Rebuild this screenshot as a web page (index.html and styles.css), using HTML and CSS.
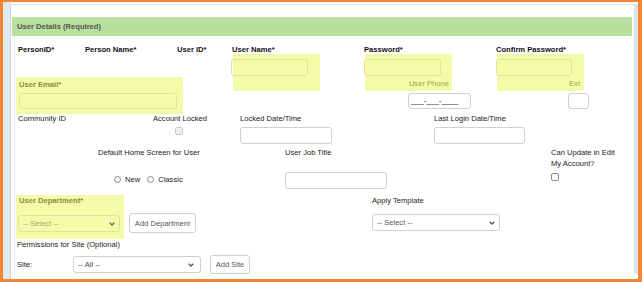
FILE: index.html
```html
<!DOCTYPE html>
<html lang="en">
<head>
    <meta charset="UTF-8">
    <title>User Details</title>
    <link rel="stylesheet" href="styles.css">
</head>
<body>
    <div class="frame">
        <div class="rail-left"></div>
        <div class="main">
            <div class="section-bar">User Details (Required)</div>
            <div class="form">
                <!-- account row -->
                <div class="row">
                    <div class="col-ids">
                        <div class="id-labels">
                            <span class="lbl req w-person-id">PersonID*</span>
                            <span class="lbl req w-person-name">Person Name*</span>
                            <span class="lbl req">User ID*</span>
                        </div>
                        <div class="hl hl-email">
                            <span class="lbl hl-lbl">User Email*</span>
                            <div class="field field-email"></div>
                        </div>
                    </div>
                    <div class="col-username">
                        <span class="lbl req pad-1">User Name*</span>
                        <div class="hl hl-cred shift-2">
                            <div class="field field-cred pull-2"></div>
                        </div>
                    </div>
                    <div class="col-password">
                        <span class="lbl req pad-1">Password*</span>
                        <div class="hl hl-cred shift-2">
                            <div class="field field-cred pull-1"></div>
                            <span class="lbl hl-note note-phone">User Phone</span>
                        </div>
                        <div class="field field-phone">___-___-____</div>
                    </div>
                    <div class="col-confirm">
                        <span class="lbl req">Confirm Password*</span>
                        <div class="hl hl-cred shift-1">
                            <div class="field field-cred field-confirm pull-1"></div>
                            <span class="lbl hl-note note-ext">Ext</span>
                        </div>
                        <div class="field field-ext"></div>
                    </div>
                </div>

                <!-- status row -->
                <div class="row">
                    <div class="col-community">
                        <span class="lbl">Community ID</span>
                    </div>
                    <div class="col-locked">
                        <span class="lbl">Account Locked</span>
                        <span class="checkbox is-disabled chk-locked"></span>
                    </div>
                    <div class="col-locked-date">
                        <span class="lbl">Locked Date/Time</span>
                        <div class="field field-date"></div>
                    </div>
                    <div class="col-last-login">
                        <span class="lbl">Last Login Date/Time</span>
                        <div class="field field-date field-login"></div>
                    </div>
                </div>

                <!-- home screen row -->
                <div class="row row-home">
                    <div class="col-home">
                        <span class="lbl">Default Home Screen for User</span>
                        <div class="radios">
                            <span class="radio"></span><span class="radio-text">New</span>
                            <span class="radio"></span><span>Classic</span>
                        </div>
                    </div>
                    <div class="col-job">
                        <span class="lbl">User Job Title</span>
                        <div class="field field-job"></div>
                    </div>
                    <div class="col-update">
                        <span class="lbl lbl-multi">Can Update in Edit<br>My Account?</span>
                        <span class="checkbox chk-update"></span>
                    </div>
                </div>

                <!-- department row -->
                <div class="row row-dept">
                    <div class="hl hl-dept">
                        <span class="lbl hl-lbl">User Department*</span>
                        <div class="select select-dept">
                            <span>-- Select --</span>
                            <svg class="chevron" width="6" height="4" viewBox="0 0 6 4"><path d="M0.7 0.7 L3 3 L5.3 0.7" fill="none" stroke="#666" stroke-width="1.3"/></svg>
                        </div>
                    </div>
                    <button class="btn btn-dept">Add Department</button>
                    <div class="col-template">
                        <span class="lbl">Apply Template</span>
                        <div class="select select-template">
                            <span>-- Select --</span>
                            <svg class="chevron" width="6" height="4" viewBox="0 0 6 4"><path d="M0.7 0.7 L3 3 L5.3 0.7" fill="none" stroke="#555" stroke-width="1.3"/></svg>
                        </div>
                    </div>
                </div>

                <div class="row-perm">
                    <span class="lbl">Permissions for Site (Optional)</span>
                </div>

                <div class="row row-site">
                    <span class="lbl site-lbl">Site:</span>
                    <div class="select select-site">
                        <span>-- All --</span>
                        <svg class="chevron" width="6" height="4" viewBox="0 0 6 4"><path d="M0.7 0.7 L3 3 L5.3 0.7" fill="none" stroke="#555" stroke-width="1.3"/></svg>
                    </div>
                    <button class="btn btn-site">Add Site</button>
                </div>
            </div>
        </div>
        <div class="rail-right"></div>
    </div>
</body>
</html>
```

FILE: styles.css
```css
:root {
    --orange: #f58634;
    --green: #b7e19c;
    --yellow: #f4fba8;
    --olive: #8a8b3e;
    --olive-light: #9c9d55;
    --border: #d0d0d0;
    --border-hl: #dde2a0;
    --text: #222;
    --text-strong: #111;
    --muted: #555;
}

* {
    box-sizing: border-box;
}

body {
    margin: 0;
    font-family: "Liberation Sans", Arial, sans-serif;
    font-size: 7.6px;
    line-height: 9px;
    color: var(--text);
    background: #fff;
}

.frame {
    width: 642px;
    height: 282px;
    border: solid var(--orange);
    border-width: 2px 4px 3px 3px;
    display: flex;
    overflow: hidden;
    background: #fff;
}

.rail-left {
    width: 8px;
    flex: none;
    background: #e2eaf2;
    border-right: 1px solid #cbd6e2;
}

.rail-right {
    width: 4px;
    flex: none;
    margin: 2px 0 5px 0;
    background: #dde4ec;
}

.main {
    flex: 1;
    min-width: 0;
    margin-top: 2px;
    border-top: 1px solid #e3e3e3;
    overflow: hidden;
}

.section-bar {
    margin: 12px 2px 0 1px;
    height: 19px;
    line-height: 19px;
    padding-left: 5px;
    background: var(--green);
    color: var(--muted);
    font-weight: 700;
}

.form {
    margin-left: 3px;
    border-left: 1px solid #eeeeee;
    padding: 9px 0 0 1px;
}

.row {
    display: flex;
    align-items: flex-start;
}

.lbl {
    display: block;
    white-space: nowrap;
}
.lbl.req {
    font-weight: 700;
    color: var(--text-strong);
}

.pad-1 { padding-left: 1px; }
.shift-1 { margin-left: 1px; }
.shift-2 { margin-left: 2px; }
.pull-1 { margin-left: -1px; }
.pull-2 { margin-left: -2px; }

/* highlighted (required) groups */
.hl {
    background: var(--yellow);
}
.hl-lbl {
    color: var(--olive);
    font-weight: 700;
}
.hl-note {
    margin-top: 3px;
    text-align: right;
    color: var(--olive-light);
}
.note-phone { padding-right: 3px; }
.note-ext { padding-right: 4px; }

.field {
    height: 17px;
    border: 1px solid var(--border);
    border-radius: 3px;
    background: #fff;
}
.hl .field {
    background: transparent;
    border-color: var(--border-hl);
}

/* account row */
.col-ids {
    width: 215px;
}
.id-labels {
    display: flex;
    padding-left: 2px;
}
.w-person-id { width: 67px; }
.w-person-name { width: 92px; }

.hl-email {
    margin-top: 23px;
    width: 167px;
    padding: 3px 0 5px 3px;
}
.field-email {
    margin-top: 4px;
    width: 158px;
    height: 16px;
}

.col-username { width: 132px; }
.col-password { width: 133px; }

.hl-cred {
    width: 87px;
    height: 37px;
    padding-top: 5px;
}
.field-cred { width: 77px; }
.field-confirm { width: 76px; }

.field-phone {
    margin: 2px 0 0 45px;
    width: 63px;
    height: 16px;
    padding-left: 2px;
    line-height: 14px;
    color: var(--text-strong);
}
.field-ext {
    margin: 2px 0 0 72px;
    width: 21px;
    height: 16px;
}

/* status row */
.col-community {
    width: 137px;
    padding-left: 2px;
}
.col-locked { width: 87px; }
.col-locked-date { width: 194px; }

.checkbox {
    display: block;
    width: 8px;
    height: 8px;
    border: 1px solid #8a8a8a;
    border-radius: 2px;
    background: #fff;
}
.checkbox.is-disabled {
    border-color: #c8c8c8;
    background: #f0f0f0;
}
.chk-locked { margin: 4px 0 0 22px; }

.field-date {
    margin-top: 4px;
    width: 92px;
}
.field-login { width: 91px; }

/* home screen row */
.row-home { margin-top: 4px; }

.col-home {
    margin-left: 82px;
    width: 187px;
}
.radios {
    display: flex;
    align-items: center;
    margin-top: 18px;
    padding-left: 16px;
}
.radio {
    width: 7px;
    height: 7px;
    margin-right: 4px;
    border: 1px solid #8a8a8a;
    border-radius: 50%;
    background: #fff;
}
.radio-text { margin-right: 7px; }

.col-job { width: 266px; }
.field-job {
    margin-top: 15px;
    width: 102px;
}

.lbl-multi {
    margin-top: -1px;
    line-height: 11px;
}
.chk-update { margin-top: 4px; }

/* department row */
.row-dept { margin-top: 6px; }

.hl-dept {
    width: 108px;
    padding: 1px 0 7px 3px;
}

.select {
    display: flex;
    align-items: center;
    justify-content: space-between;
    height: 17px;
    padding: 0 4px;
    border: 1px solid var(--border);
    border-radius: 3px;
    background: #fff;
    color: var(--muted);
    white-space: nowrap;
}
.select-dept {
    margin: 10px 0 0 -1px;
    width: 102px;
    background: transparent;
    border-color: var(--border-hl);
    color: #a5a668;
}
.select-template {
    margin-top: 9px;
    width: 128px;
}
.select-site {
    width: 128px;
    padding-right: 6px;
    color: #444;
}
.chevron { flex: none; }

.btn {
    height: 20px;
    padding: 0;
    border: 1px solid #cfcfcf;
    border-radius: 3px;
    background: #fff;
    color: var(--muted);
    font: inherit;
    line-height: 9px;
}
.btn-dept {
    margin: 18px 0 0 5px;
    width: 67px;
}

.col-template {
    margin-left: 176px;
    padding-top: 1px;
}

/* site permissions */
.row-perm {
    margin-top: 1px;
    padding-left: 1px;
}

.row-site {
    margin-top: 6px;
    align-items: center;
    height: 19px;
}
.site-lbl {
    width: 57px;
    padding-left: 1px;
}
.btn-site {
    margin-left: 9px;
    width: 40px;
    height: 19px;
}
```
